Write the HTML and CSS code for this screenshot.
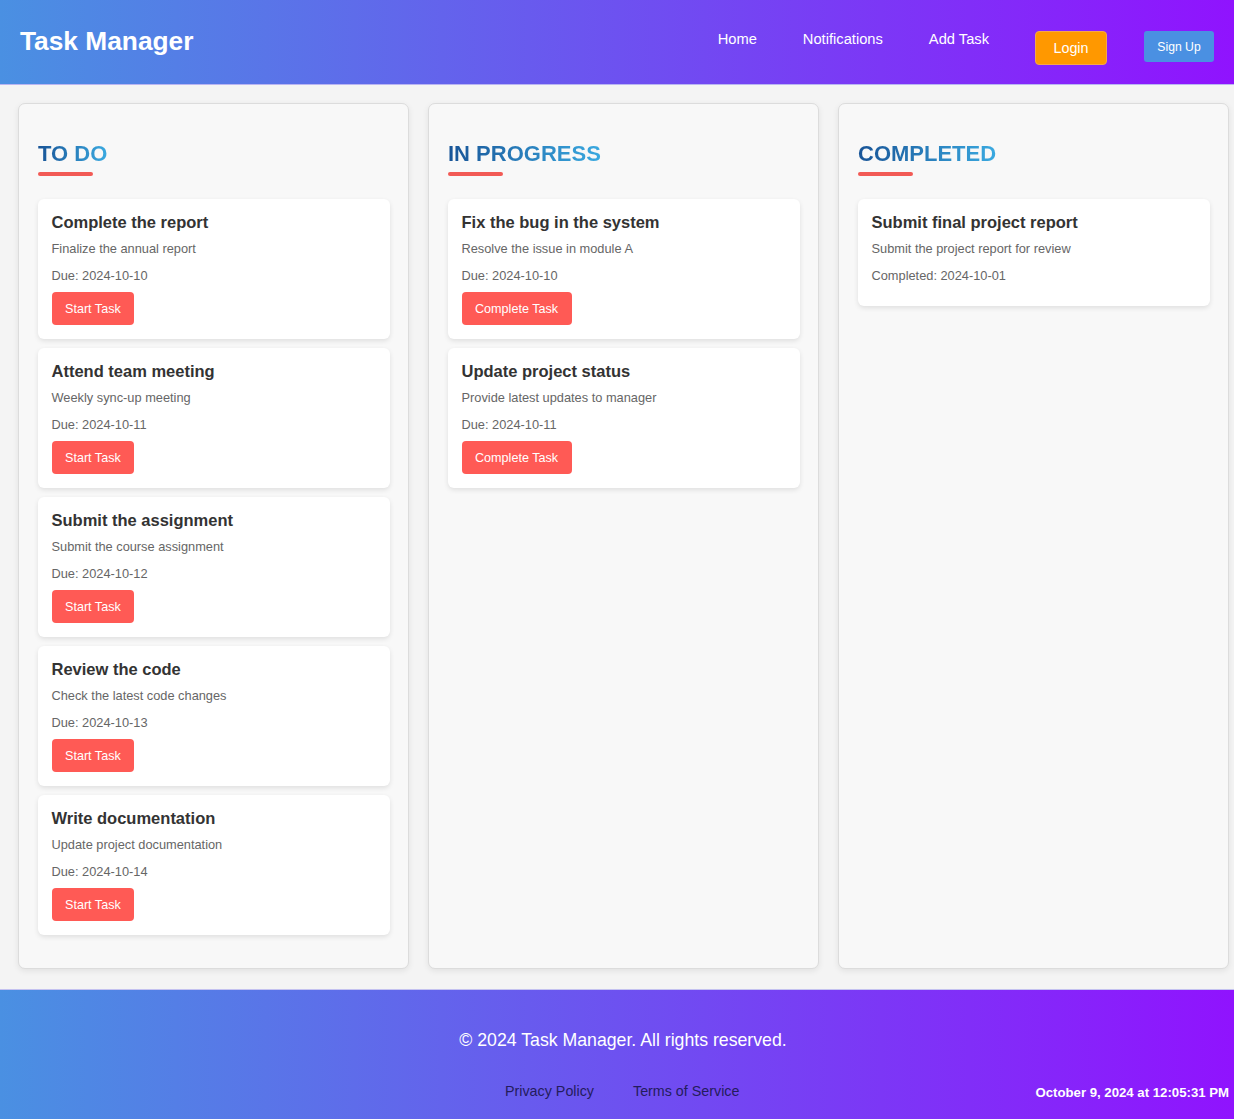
FILE: index.html
```html
<!DOCTYPE html>
<html lang="en">
<head>
<meta charset="utf-8">
<title>Task Manager</title>
<link rel="stylesheet" href="styles.css">
</head>
<body>
<header class="site-header">
  <h1 class="logo">Task Manager</h1>
  <nav class="nav">
    <a class="nav-link" href="#">Home</a>
    <a class="nav-link" href="#">Notifications</a>
    <a class="nav-link" href="#">Add Task</a>
    <button class="btn-login">Login</button>
    <button class="btn-signup">Sign Up</button>
  </nav>
</header>

<main class="board">
  <section class="column">
    <h2 class="col-title">TO DO</h2>
    <div class="card">
      <h3 class="card-title">Complete the report</h3>
      <p class="card-desc">Finalize the annual report</p>
      <p class="card-date">Due: 2024-10-10</p>
      <button class="btn-task">Start Task</button>
    </div>
    <div class="card">
      <h3 class="card-title">Attend team meeting</h3>
      <p class="card-desc">Weekly sync-up meeting</p>
      <p class="card-date">Due: 2024-10-11</p>
      <button class="btn-task">Start Task</button>
    </div>
    <div class="card">
      <h3 class="card-title">Submit the assignment</h3>
      <p class="card-desc">Submit the course assignment</p>
      <p class="card-date">Due: 2024-10-12</p>
      <button class="btn-task">Start Task</button>
    </div>
    <div class="card">
      <h3 class="card-title">Review the code</h3>
      <p class="card-desc">Check the latest code changes</p>
      <p class="card-date">Due: 2024-10-13</p>
      <button class="btn-task">Start Task</button>
    </div>
    <div class="card">
      <h3 class="card-title">Write documentation</h3>
      <p class="card-desc">Update project documentation</p>
      <p class="card-date">Due: 2024-10-14</p>
      <button class="btn-task">Start Task</button>
    </div>
  </section>

  <section class="column">
    <h2 class="col-title">IN PROGRESS</h2>
    <div class="card">
      <h3 class="card-title">Fix the bug in the system</h3>
      <p class="card-desc">Resolve the issue in module A</p>
      <p class="card-date">Due: 2024-10-10</p>
      <button class="btn-task">Complete Task</button>
    </div>
    <div class="card">
      <h3 class="card-title">Update project status</h3>
      <p class="card-desc">Provide latest updates to manager</p>
      <p class="card-date">Due: 2024-10-11</p>
      <button class="btn-task">Complete Task</button>
    </div>
  </section>

  <section class="column">
    <h2 class="col-title">COMPLETED</h2>
    <div class="card">
      <h3 class="card-title">Submit final project report</h3>
      <p class="card-desc">Submit the project report for review</p>
      <p class="card-date">Completed: 2024-10-01</p>
    </div>
  </section>
</main>

<footer class="site-footer">
  <p class="copyright">© 2024 Task Manager. All rights reserved.</p>
  <div class="footer-bottom">
    <div class="footer-links">
      <a href="#">Privacy Policy</a>
      <a href="#">Terms of Service</a>
    </div>
    <div class="datetime">October 9, 2024 at 12:05:31 PM</div>
  </div>
</footer>
</body>
</html>
```

FILE: styles.css
```css
* { box-sizing: border-box; }

html, body {
  margin: 0;
  padding: 0;
}

body {
  font-family: "Liberation Sans", Arial, sans-serif;
  background: #f4f4f4;
  color: #333;
}

.site-header {
  height: 85px;
  display: flex;
  justify-content: space-between;
  align-items: flex-start;
  padding: 0 20px;
  background: linear-gradient(to right, #4a90e2, #9013fe);
  border-bottom: 1px solid #b9b5f2;
}

.logo {
  margin: 26px 0 0;
  font-size: 26.3px;
  line-height: 30px;
  font-weight: bold;
  color: #fff;
}

.nav {
  display: flex;
  align-items: flex-start;
  padding-top: 31px;
}

.nav-link {
  color: #fff;
  text-decoration: none;
  font-size: 14.7px;
  line-height: 17px;
  margin-right: 46px;
}

.btn-login {
  font-family: inherit;
  background: #ff9800;
  color: #fff;
  border: 1px solid #f5a64a;
  border-radius: 4px;
  font-size: 14.3px;
  height: 34px;
  width: 72px;
  padding: 0;
  margin-right: 37px;
}

.btn-signup {
  font-family: inherit;
  background: #4a90e2;
  color: #fff;
  border: none;
  border-radius: 3px;
  font-size: 12.2px;
  height: 31px;
  width: 70px;
  padding: 0;
}

.board {
  display: grid;
  grid-template-columns: repeat(3, 391px);
  gap: 19px;
  padding: 18px 5px 20px 18px;
  align-items: stretch;
}

.column {
  background: #f8f8f8;
  border: 1px solid #dcdcdc;
  border-radius: 7px;
  box-shadow: 0 2px 6px rgba(0, 0, 0, 0.08);
  padding: 37px 18px 24px 19px;
  min-height: 866px;
}

.col-title {
  display: inline-block;
  margin: 0;
  font-size: 22px;
  line-height: 25px;
  font-weight: bold;
  background: linear-gradient(to right, #185497, #3aa9e0);
  -webkit-background-clip: text;
  background-clip: text;
  color: transparent;
}

.col-title::after {
  content: "";
  display: block;
  width: 55px;
  height: 4px;
  margin-top: 6px;
  border-radius: 2px;
  background: #f25a55;
}

.card {
  background: #fff;
  border-radius: 6px;
  box-shadow: 0 2px 5px rgba(0, 0, 0, 0.1);
  padding: 14px 14px 14px 13.5px;
  margin-top: 23px;
}

.card + .card {
  margin-top: 9px;
}

.card-title {
  margin: 0 0 8.5px;
  font-size: 16.5px;
  line-height: 19px;
  font-weight: bold;
  color: #333;
}

.card-desc {
  margin: 0 0 12px;
  font-size: 12.8px;
  line-height: 15px;
  color: #666;
}

.card-date {
  margin: 0 0 9.5px;
  font-size: 12.8px;
  line-height: 15px;
  color: #666;
}

.btn-task {
  font-family: inherit;
  background: #ff5a55;
  color: #fff;
  border: none;
  border-radius: 4px;
  font-size: 12.6px;
  height: 33px;
  padding: 0 13.5px;
  display: block;
}

.site-footer {
  height: 130px;
  background: linear-gradient(to right, #4a90e2, #9013fe);
  border-top: 1px solid #c4c2f0;
  text-align: center;
  padding-top: 40px;
}

.copyright {
  margin: 0;
  padding-left: 12px;
  font-size: 17.7px;
  line-height: 20px;
  color: #fff;
}

.footer-bottom {
  display: flex;
  align-items: center;
  justify-content: space-between;
  padding: 0 5px 0 505px;
  margin-top: 31px;
}

.footer-links {
  display: flex;
  gap: 39px;
}

.footer-links a {
  color: #241c5c;
  text-decoration: none;
  font-size: 14.3px;
  line-height: 17px;
}

.datetime {
  color: #fff;
  font-weight: bold;
  font-size: 13.2px;
  line-height: 16px;
  margin-top: 4px;
}
```
